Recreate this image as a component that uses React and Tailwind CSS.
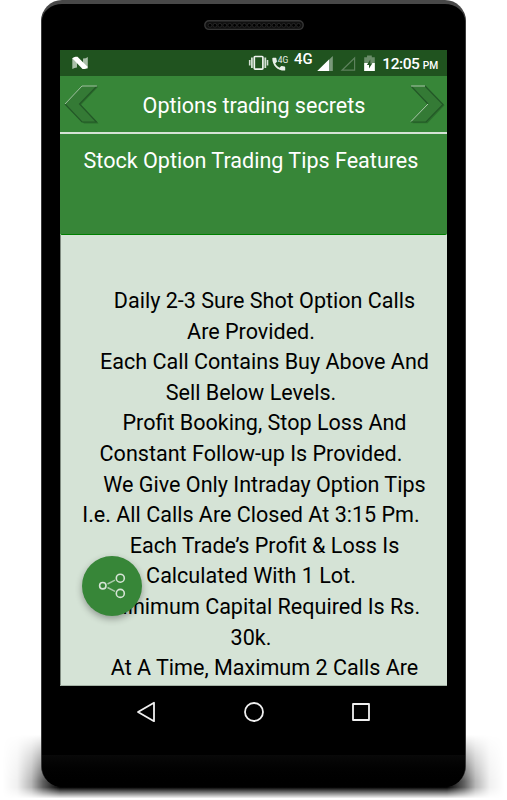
const tips = [
  { text: 'Daily 2-3 Sure Shot Option Calls', first: true },
  { text: 'Are Provided.' },
  { text: 'Each Call Contains Buy Above And', first: true },
  { text: 'Sell Below Levels.' },
  { text: 'Profit Booking, Stop Loss And', first: true },
  { text: 'Constant Follow-up Is Provided.' },
  { text: 'We Give Only Intraday Option Tips', first: true },
  { text: 'I.e. All Calls Are Closed At 3:15 Pm.' },
  { text: 'Each Trade’s Profit & Loss Is', first: true },
  { text: 'Calculated With 1 Lot.' },
  { text: 'Minimum Capital Required Is Rs.', first: true },
  { text: '30k.' },
  { text: 'At A Time, Maximum 2 Calls Are', first: true },
];

function Speaker() {
  return (
    <svg width="100" height="11" viewBox="0 0 100 11" fill="none">
      <rect x="0.8" y="0.8" width="98.4" height="8.6" rx="4.3" fill="#101010" stroke="#363636" strokeWidth="1.4" />
      {Array.from({ length: 19 }, (_, i) => (
        <circle key={i} cx={6 + i * 4.92} cy="5.3" r="1.9" fill="#000" stroke="#2c2c2c" strokeWidth="0.8" />
      ))}
    </svg>
  );
}

function StatusBar() {
  return (
    <div className="flex h-[26px] items-center justify-between bg-[#20531f] pl-3 pr-2 text-white">
      <svg width="17" height="14" viewBox="0 0 17 14">
        <path d="M0.300 2L5 3V11.500Q2.500 11.500 0.300 13Z" fill="#a9bea8" />
        <path d="M11 2.500Q14 2.500 15.800 1V12.500H11Z" fill="#a9bea8" />
        <path d="M0.300 2.300Q1.800.8 3.500.8H5.500L15.800 11Q14.500 12.900 12.500 13H10.500Z" fill="#fff" />
      </svg>
      <StatusIcons />
    </div>
  );
}

function StatusIcons() {
  return (
    <svg width="192" height="26" viewBox="247 50 192 26" fill="none" className="overflow-visible">
      {/* vibrate */}
      <rect x="254.300" y="56.500" width="8.600" height="12.600" rx="0.8" stroke="#eef3ee" strokeWidth="1.7" />
      <path d="M251.900 57.500v10.500M265.300 57.500v10.500" stroke="#d3dfd3" strokeWidth="1.8" />
      <path d="M249.700 60v5.500M267.500 60v5.500" stroke="#d3dfd3" strokeWidth="1.6" />
      {/* call */}
      <path d="M273.100 57.700h2.500q.7 0 .8.8.1 1.300.5 2.500.2.600-.2 1l-1.500 1.500q1.500 2.900 4.300 4.300l1.500-1.500q.4-.4 1-.2 1.200.4 2.500.5.700.1.700.8v2.500q0 .7-.7.700c-6.900 0-12.200-5.300-12.200-12.200q0-.7.8-.7Z" fill="#e8efe8" />
      <text x="277.800" y="63.400" fontSize="9.500" fill="#e8efe8" textLength="10.500" lengthAdjust="spacingAndGlyphs">4G</text>
      <text x="294" y="64.300" fontSize="14" fontWeight="500" fill="#fff" textLength="18.500" lengthAdjust="spacingAndGlyphs">4G</text>
      {/* signal strength */}
      <path d="M317.300 71L332.800 56v15Z" fill="#79987a" />
      <path d="M317.300 71L329 59.500V71Z" fill="#fff" />
      <path d="M342 70.200L354.600 58v12.200Z" stroke="#5d815d" strokeWidth="1.200" />
      {/* battery */}
      <path d="M367 55.500h4.800v1.700h3V71H364.200V57.200H367Z" fill="#6a8c69" />
      <path d="M364.200 63h10.600v8H364.200Z" fill="#fff" />
      <path d="M370.300 59.500L366.900 65h2.100v3.400l3.400-5.200h-2.100Z" fill="#20531f" />
      <text x="382.300" y="69" fontSize="15.500" fontWeight="500" fill="#fff" textLength="37.500">12:05</text>
      <text x="422.700" y="69" fontSize="11" fontWeight="500" fill="#fff" textLength="15.500" lengthAdjust="spacingAndGlyphs">PM</text>
    </svg>
  );
}

function PrevArrow() {
  return (
    <svg width="36" height="40" viewBox="0 0 36 40" fill="none">
      <path d="M1 19L18 1.500H33L16 19.500L33.500 38H19Z" fill="#235f25" opacity="0.6" transform="translate(1 1.500)" />
      <path d="M1 20L18 2H33L15.500 20L32.500 38H18Z" fill="#347a35" />
      <path d="M33 2L15.500 20L32.500 38H18L1 20" stroke="#235827" strokeWidth="1.200" />
      <path d="M1 20L18 2H33" stroke="#9fbf9f" strokeWidth="1" />
    </svg>
  );
}

function NextArrow() {
  return (
    <svg width="36" height="40" viewBox="0 0 36 40" fill="none">
      <path d="M1.500 1.500H16L34 20L17 38H2L19 19.500Z" fill="#235f25" opacity="0.6" transform="translate(0.500 1.200)" />
      <path d="M1 2H15L33 20.500L16 38H1L18 20Z" fill="#347a35" />
      <path d="M1 2L18 20M15 2L33 20.500L16 38H1" stroke="#235827" strokeWidth="1.200" />
      <path d="M1 2H15M18 20L1 37.500" stroke="#a9c5a9" strokeWidth="1" />
    </svg>
  );
}

function ShareButton() {
  return (
    <button className="absolute left-[22px] top-[506px] flex h-[60px] w-[60px] items-center justify-center rounded-full bg-[#378638] shadow-[0_3px_7px_rgba(0,0,0,0.32)]">
      <svg width="28" height="26" viewBox="0 0 28 26" fill="none" stroke="#d6e4d6" strokeWidth="1.600">
        <circle cx="4.800" cy="12.700" r="3.200" />
        <circle cx="22.300" cy="5.200" r="4" />
        <circle cx="22.300" cy="20.400" r="4" />
        <path d="M9.500 11L17 7.200M9.500 14.500L17 18.300" stroke="#a9c9a9" strokeWidth="1.500" />
      </svg>
    </button>
  );
}

function NavBar() {
  return (
    <div className="flex h-[51px] shrink-0 items-center justify-between px-[76px]">
      <svg width="20" height="22" viewBox="0 0 20 22" fill="none" stroke="#f0f0f0" strokeWidth="1.800" strokeLinejoin="round">
        <path d="M18 1.800V20.200L2 11Z" />
      </svg>
      <svg width="22" height="22" viewBox="0 0 22 22" fill="none" stroke="#f0f0f0" strokeWidth="1.800">
        <circle cx="11" cy="11" r="9" />
      </svg>
      <svg width="20" height="20" viewBox="0 0 20 20" fill="none" stroke="#f0f0f0" strokeWidth="1.800" strokeLinejoin="round">
        <rect x="2" y="2" width="16" height="16" />
      </svg>
    </div>
  );
}

export default function App() {
  return (
    <div className="relative h-[800px] w-[507px] overflow-hidden bg-white font-[Roboto,'Liberation_Sans',sans-serif]">
      {/* ground shadow behind the lower part of the phone */}
      <svg className="absolute left-0 top-[725px]" width="507" height="75" viewBox="0 0 507 75">
        <defs>
          <linearGradient id="left">
            <stop offset="0" stopColor="#000" stopOpacity="0" />
            <stop offset="0.25" stopColor="#000" stopOpacity="0.06" />
            <stop offset="0.5" stopColor="#000" stopOpacity="0.28" />
            <stop offset="0.7" stopColor="#000" stopOpacity="0.62" />
            <stop offset="1" stopColor="#000" stopOpacity="1" />
          </linearGradient>
          <linearGradient id="right" x1="1" x2="0">
            <stop offset="0" stopColor="#000" stopOpacity="0" />
            <stop offset="0.25" stopColor="#000" stopOpacity="0.06" />
            <stop offset="0.5" stopColor="#000" stopOpacity="0.28" />
            <stop offset="0.7" stopColor="#000" stopOpacity="0.62" />
            <stop offset="1" stopColor="#000" stopOpacity="1" />
          </linearGradient>
          <linearGradient id="fade" x2="0" y2="1">
            <stop offset="0.13" stopColor="#000" />
            <stop offset="0.4" stopColor="#777" />
            <stop offset="0.75" stopColor="#fff" />
            <stop offset="0.83" stopColor="#fff" />
            <stop offset="0.9" stopColor="#888" />
            <stop offset="0.98" stopColor="#000" />
          </linearGradient>
          <mask id="ground">
            <rect width="507" height="75" fill="url(#fade)" />
          </mask>
        </defs>
        <g mask="url(#ground)">
          <rect x="3" width="57" height="75" fill="url(#left)" />
          <rect x="60" width="387" height="75" />
          <rect x="447" width="57" height="75" fill="url(#right)" />
        </g>
      </svg>

      <div className="relative ml-[41px] flex h-[787px] w-[425px] flex-col rounded-[21px] border-x border-t-4 border-x-[#3a3a3a] border-t-[#484848] bg-black px-[18px]">
        <div className="flex h-[46px] shrink-0 justify-center pt-4">
          <Speaker />
        </div>

        <div className="relative h-[636px] w-[387px] shrink-0 overflow-hidden border-b border-b-[#a5b3a6] bg-[#d5e3d6]">
          <StatusBar />
          <div className="flex h-14 items-center justify-between bg-[#378638] pl-1 pr-px">
            <PrevArrow />
            <h1 className="whitespace-nowrap pr-0.5 pt-1 text-[21.55px] leading-7 text-white">Options trading secrets</h1>
            <NextArrow />
          </div>
          <div className="h-[103px] rounded-b-[2px] border-b border-t-2 border-b-[#008000] border-t-[#d5e3d6] bg-[#378638] pt-[13px] text-center">
            <h2 className="whitespace-nowrap pr-[5px] text-[21.55px] leading-7 text-white">Stock Option Trading Tips Features</h2>
          </div>
          <div className="h-[450px] border-l border-l-[#7f8b80] pt-[51px] text-[21.55px] leading-[30.6px] text-black">
            {tips.map((line) => (
              <p
                key={line.text}
                className={line.first ? 'whitespace-nowrap pl-[21px] text-center' : 'whitespace-nowrap pr-[6px] text-center'}
              >
                {line.text}
              </p>
            ))}
          </div>
          <ShareButton />
        </div>

        <NavBar />
        <div className="-mx-[18px] mt-[18px] h-[32px] shrink-0 rounded-b-[20px] bg-linear-to-b from-[#090909] to-black" />
      </div>
    </div>
  );
}
